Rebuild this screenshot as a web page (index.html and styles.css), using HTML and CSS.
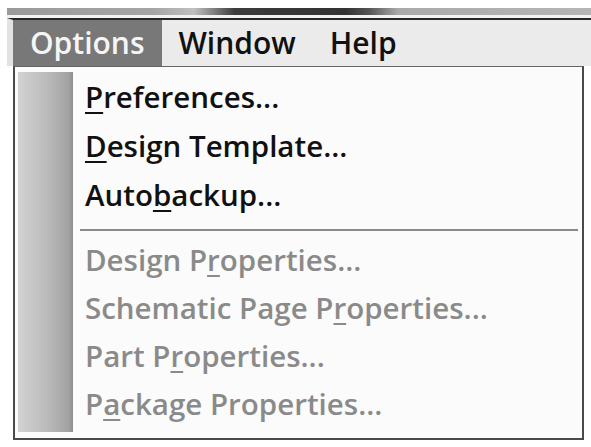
FILE: index.html
```html
<!DOCTYPE html>
<html>
<head>
  <title>Options menu</title>
  <link rel="stylesheet" href="styles.css">
</head>
<body>
  <div class="window">
    <div class="titlebar"></div>

    <div class="menubar">
      <div class="menubar-item active">Options</div>
      <div class="menubar-item">Window</div>
      <div class="menubar-item">Help</div>
    </div>

    <div class="dropdown">
      <div class="stripe"></div>
      <ul class="items">
        <li class="item"><u>P</u>references...</li>
        <li class="item"><u>D</u>esign Template...</li>
        <li class="item">Auto<u>b</u>ackup...</li>
        <li class="separator"></li>
        <li class="item disabled">Design P<u>r</u>operties...</li>
        <li class="item disabled">Schematic Page P<u>r</u>operties...</li>
        <li class="item disabled">Part P<u>r</u>operties...</li>
        <li class="item disabled">P<u>a</u>ckage Properties...</li>
      </ul>
    </div>
  </div>
</body>
</html>
```

FILE: styles.css
```css
body {
  margin: 0;
  background-color: #fff;
  font-family: "Open Sans", "DejaVu Sans", sans-serif;
}

.window {
  margin: 8px 0 0 7px;
}

  .titlebar {
    height: 7px;
    background: linear-gradient(to right, #9a9a9a 0%, #a5a5a5 25%, #c0c0c0 32%, #3c3c3c 39%, #333 58%, #555 62%, #aaa 67%, #b5b5b5 100%);
    border-bottom: 3px solid #f2f2f2;
  }

  .menubar {
    display: flex;
    height: 46px;
    background-color: #ebebeb;
    border-top: 2px solid #262626;
    border-left: 6px solid #e2e2e2;
  }

  .menubar-item {
    padding: 0 17px;
    font-size: 30px;
    font-weight: 600;
    line-height: 46px;
    color: #111;
  }

  .menubar-item.active {
    padding-left: 17px;
    background-color: #787878;
    color: #f5f5f5;
  }

.dropdown {
  display: flex;
  margin-left: 6px;
  width: 567px;
  height: 371px;
  background-color: #fbfbfb;
  border: 2px solid #4a4a4a;
  border-top: 1px solid #666;
}

  .stripe {
    width: 55px;
    margin: 5px 0 6px 3px;
    background: linear-gradient(to right, #d2d2d2 0%, #bcbcbc 50%, #a2a2a2 92%, #8e8e8e 100%);
  }

  .items {
    flex: 1;
    list-style: none;
    margin: 0;
    padding: 5px 4px 0 12px;
  }

  .item {
    height: 49px;
    line-height: 49px;
    font-size: 29.5px;
    font-weight: 600;
    color: #111;
    white-space: nowrap;
  }

  .item u {
    text-underline-offset: 4px;
    text-decoration-thickness: 2px;
  }

  .item.disabled {
    height: 48px;
    line-height: 48px;
    color: #8a8a8a;
  }

  .separator {
    height: 2px;
    margin: 10px 0 5px -5px;
    background-color: #8a8a8a;
  }
```
